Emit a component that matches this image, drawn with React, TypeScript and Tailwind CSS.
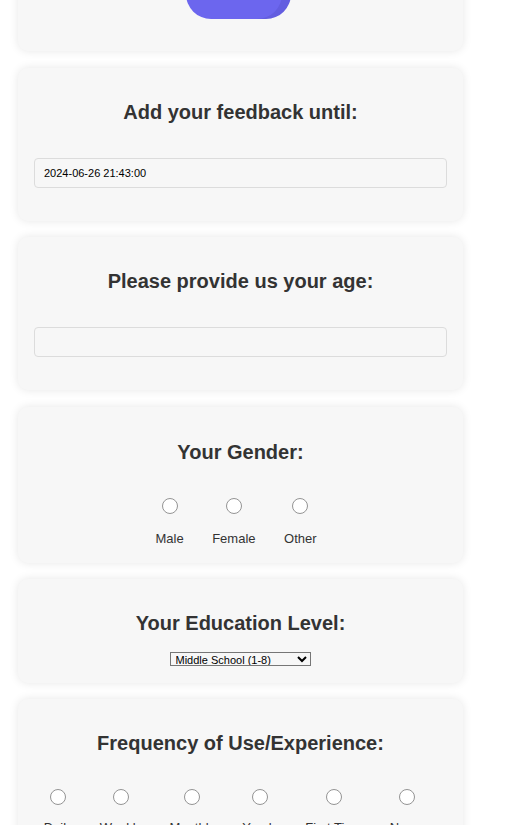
export default function App() {
  const genders = ['Male', 'Female', 'Other']
  const frequencies = ['Daily', 'Weekly', 'Monthly', 'Yearly', 'First Time', 'Never']

  return (
    <div className="min-h-screen bg-white font-['Liberation_Sans',Arial,sans-serif] text-[#333] overflow-hidden">
      <div className="ml-[18px] w-[445px] -mt-[81px] flex flex-col gap-[16.6px]">
        {/* Submit card (scrolled partly out of view) */}
        <div className="rounded-[10px] bg-[#f7f7f7] shadow-[0_0_10px_rgba(0,0,0,0.1)] pt-[40px] pb-[32px] flex justify-center">
          <button className="h-[60px] w-[105px] ml-[-5px] pb-[20px] rounded-[25px] bg-[#6c66ee] text-white text-[16px] shadow-[inset_-9px_0_0_rgba(40,30,120,0.12)]">
            Submit
          </button>
        </div>

        {/* Deadline */}
        <div className="rounded-[10px] bg-[#f7f7f7] shadow-[0_0_10px_rgba(0,0,0,0.1)] px-4 pt-[33px] pb-[33px]">
          <h2 className="text-[20px] leading-[23px] font-bold text-center">Add your feedback until:</h2>
          <input
            readOnly
            value="2024-06-26 21:43:00"
            className="mt-[34px] block w-full h-[30px] px-[9px] rounded-[4px] border border-[#dcdcdc] bg-[#f7f7f7] text-[11px] text-black outline-none"
          />
        </div>

        {/* Age */}
        <div className="rounded-[10px] bg-[#f7f7f7] shadow-[0_0_10px_rgba(0,0,0,0.1)] px-4 pt-[33px] pb-[33px]">
          <h2 className="text-[20px] leading-[23px] font-bold text-center">Please provide us your age:</h2>
          <input
            className="mt-[34px] block w-full h-[30px] px-[9px] rounded-[4px] border border-[#dcdcdc] bg-[#f7f7f7] text-[11px] text-black outline-none"
          />
        </div>

        {/* Gender */}
        <div className="rounded-[10px] bg-[#f7f7f7] shadow-[0_0_10px_rgba(0,0,0,0.1)] px-4 pt-[34px] pb-[16.5px]">
          <h2 className="text-[20px] leading-[23px] font-bold text-center">Your Gender:</h2>
          <div className="mt-[34px] flex justify-center gap-[28.5px] pr-[9px]">
            {genders.map((g) => (
              <label key={g} className="flex flex-col items-center">
                <span className="w-4 h-4 rounded-full border-[1.5px] border-[#949494] bg-white" />
                <span className="mt-[17.5px] text-[13px] leading-[15px]">{g}</span>
              </label>
            ))}
          </div>
        </div>

        {/* Education */}
        <div className="rounded-[10px] bg-[#f7f7f7] shadow-[0_0_10px_rgba(0,0,0,0.1)] px-4 pt-[33px] pb-[17px]">
          <h2 className="text-[20px] leading-[23px] font-bold text-center">Your Education Level:</h2>
          <div className="mt-[16.5px] flex justify-center pr-[1px]">
            <select className="w-[141px] h-[14px] border border-[#767676] text-[11px] leading-[12px] text-black py-0 px-[1px]">
              <option>Middle School (1-8)</option>
              <option>High School (9-12)</option>
              <option>Bachelor's Degree</option>
              <option>Master's Degree</option>
              <option>Doctorate</option>
            </select>
          </div>
        </div>

        {/* Frequency */}
        <div className="rounded-[10px] bg-[#f7f7f7] shadow-[0_0_10px_rgba(0,0,0,0.1)] px-4 pt-[33px] pb-[17px]">
          <h2 className="text-[20px] leading-[23px] font-bold text-center">Frequency of Use/Experience:</h2>
          <div className="mt-[33.5px] flex justify-center gap-[27.3px] pr-[13px]">
            {frequencies.map((f) => (
              <label key={f} className="flex flex-col items-center">
                <span className="w-4 h-4 rounded-full border-[1.5px] border-[#949494] bg-white" />
                <span className="mt-[15.5px] text-[13px] leading-[15px] whitespace-nowrap">{f}</span>
              </label>
            ))}
          </div>
        </div>
      </div>
    </div>
  )
}
